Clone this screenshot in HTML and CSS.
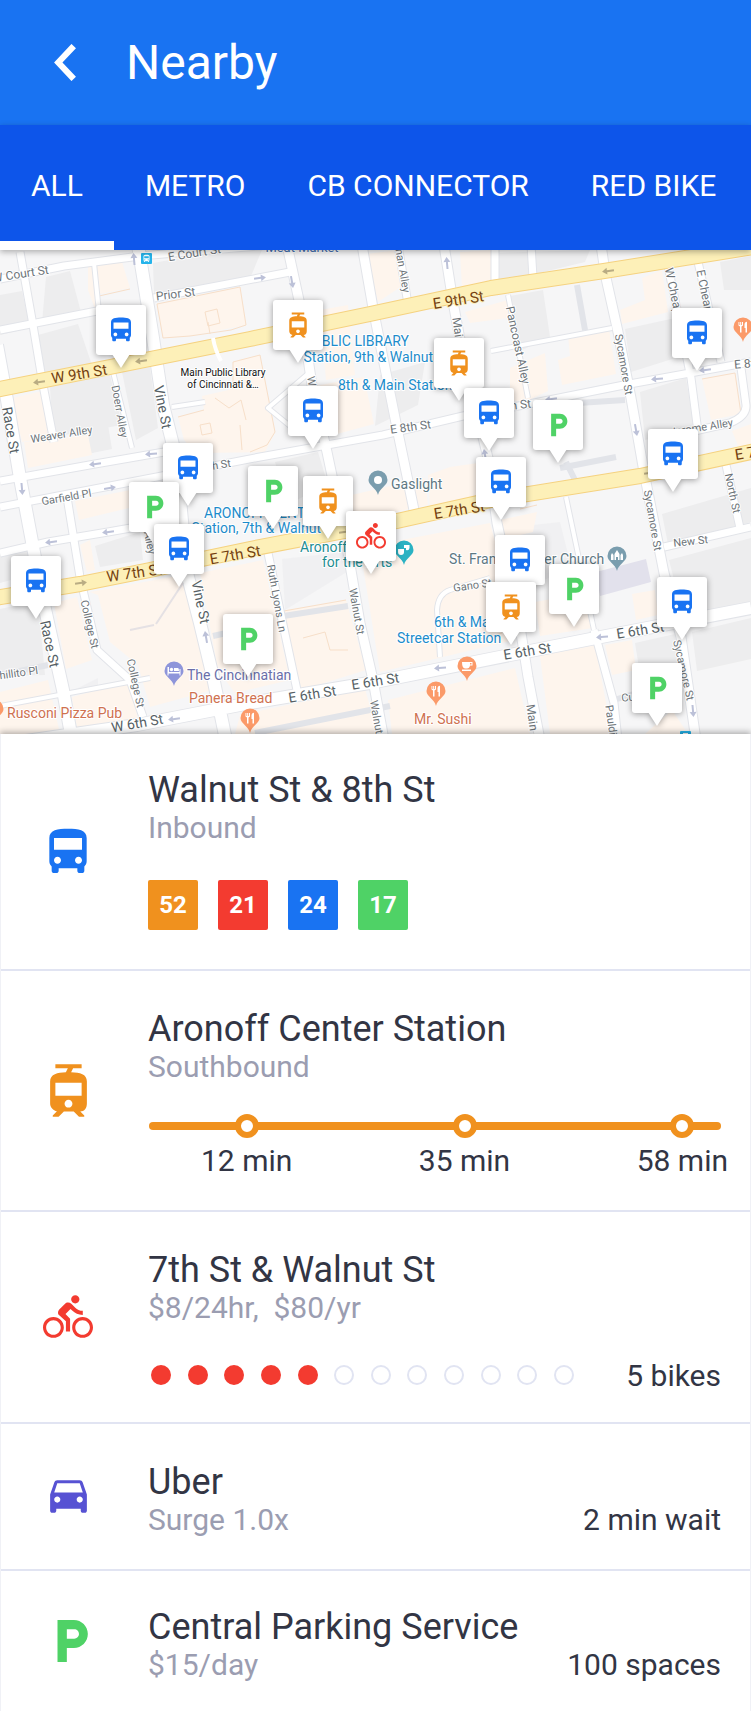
FILE: index.html
```html
<!DOCTYPE html>
<html lang="en">
<head>
<meta charset="utf-8">
<meta name="viewport" content="width=device-width, initial-scale=1">
<title>Nearby</title>
<link rel="stylesheet" href="styles.css">
</head>
<body>
<svg class="sprite" aria-hidden="true">
  <symbol id="bus" viewBox="0 0 24 24"><path d="M4 16c0 .88.39 1.67 1 2.22V20c0 .55.45 1 1 1h1c.55 0 1-.45 1-1v-1h8v1c0 .55.45 1 1 1h1c.55 0 1-.45 1-1v-1.78c.61-.55 1-1.34 1-2.22V6c0-3.5-3.58-4-8-4s-8 .5-8 4v10zm3.5 1c-.83 0-1.500-.67-1.500-1.500S6.670 14 7.500 14s1.500.67 1.500 1.500S8.330 17 7.500 17zm9 0c-.83 0-1.500-.67-1.500-1.500s.67-1.500 1.500-1.500 1.500.67 1.500 1.500-.67 1.500-1.500 1.500zm1.500-6H6V6h12v5z"/></symbol>
  <symbol id="tram" viewBox="0 0 24 24"><path d="M19 16.940V8.500c0-2.790-2.610-3.400-6.010-3.490l.76-1.510H17V2H7v1.500h4.750l-.76 1.520C7.860 5.110 5 5.730 5 8.500v8.440c0 1.450 1.190 2.660 2.590 2.970L6 21.500v.5h2.230l2-2H14l2 2h2v-.5L16.500 20h-.08c1.690 0 2.580-1.370 2.580-3.060zm-7 1.560c-.83 0-1.500-.67-1.500-1.500s.67-1.500 1.500-1.500 1.500.67 1.500 1.500-.67 1.500-1.500 1.500zm5-4.500H7V9h10v5z"/></symbol>
  <symbol id="bike" viewBox="0 0 24 24"><path d="M15.500 5.500c1.100 0 2-.9 2-2s-.9-2-2-2-2 .9-2 2 .9 2 2 2zM5 12c-2.800 0-5 2.200-5 5s2.200 5 5 5 5-2.200 5-5-2.200-5-5-5zm0 8.500c-1.900 0-3.500-1.600-3.500-3.500s1.600-3.500 3.500-3.500 3.500 1.600 3.500 3.500-1.600 3.500-3.500 3.500zm5.800-10l2.400-2.400.8.8c1.300 1.300 3 2.100 5.100 2.100V9c-1.500 0-2.700-.6-3.600-1.500l-1.900-1.900c-.5-.4-1-.6-1.600-.6s-1.100.2-1.400.6L7.800 8.400c-.4.4-.6.9-.6 1.400 0 .6.2 1.100.6 1.400L11 14v5h2v-6.200l-2.200-2.300zM19 12c-2.800 0-5 2.200-5 5s2.200 5 5 5 5-2.200 5-5-2.200-5-5-5zm0 8.500c-1.900 0-3.500-1.600-3.500-3.500s1.600-3.500 3.500-3.500 3.500 1.600 3.500 3.500-1.600 3.500-3.500 3.500z"/></symbol>
  <symbol id="car" viewBox="0 0 24 24"><path d="M18.920 6.010C18.720 5.420 18.160 5 17.500 5h-11c-.66 0-1.210.42-1.420 1.010L3 12v8c0 .55.45 1 1 1h1c.55 0 1-.45 1-1v-1h12v1c0 .55.45 1 1 1h1c.55 0 1-.45 1-1v-8l-2.080-5.990zM6.500 16c-.83 0-1.500-.67-1.500-1.500S5.670 13 6.500 13s1.500.67 1.500 1.500S7.330 16 6.500 16zm11 0c-.83 0-1.500-.67-1.500-1.500s.67-1.500 1.500-1.500 1.500.67 1.500 1.500-.67 1.500-1.500 1.500zM5 11l1.500-4.500h11L19 11H5z"/></symbol>
  <symbol id="parking" viewBox="-.5 0 24 24"><path d="M13 3H6v18h4v-6h3c3.310 0 6-2.690 6-6s-2.690-6-6-6zm.2 8H10V7h3.200c1.100 0 2 .9 2 2s-.9 2-2 2z"/></symbol>
  <symbol id="arrow" viewBox="-6 -4 12 8" overflow="visible"><path d="M-6 0L-1-3.500V-1H6V1H-1V3.500z"/></symbol>
  <symbol id="poi" viewBox="-10 -10 20 29" overflow="visible"><path d="M0-9.500a9.500 9.500 0 0 1 9.500 9.500C9.500 5.500 1.500 8 0 15C-1.500 8-9.500 5.500-9.500 0A9.500 9.500 0 0 1 0-9.500z"/></symbol>
  <symbol id="fork" viewBox="-6 -6 12 12" overflow="visible"><path d="M-4.500-5v3.500l1.500 1V5.500h1.500V-.5L0-1.500V-5h-1v3h-.8v-3h-1v3h-.8v-3zM1.500-2.500C1.500-4 2.500-5 4-5.200V5.500H2.500V1h-1z"/></symbol>
</svg>

<header class="bar">
  <button class="back" type="button" aria-label="Back">
    <svg viewBox="0 0 24 36"><path d="M20 2L5 18L20 34" /></svg>
  </button>
  <h1>Nearby</h1>
</header>

<nav class="tabs" aria-label="Services">
  <a class="tab active" href="#all" aria-current="page">ALL</a>
  <a class="tab" href="#metro">METRO</a>
  <a class="tab" href="#connector">CB CONNECTOR</a>
  <a class="tab" href="#redbike">RED BIKE</a>
</nav>

<main>
<section class="map" aria-label="Map">
<svg class="streets" viewBox="0 250 751 484">
  <rect class="land" x="0" y="250" width="751" height="484"/>
  <g class="block-grey">
    <path d="M0 295L22 291L30 328L0 335zM46 277L70 271L82 316L42 323zM38 335L78 324L92 365L45 375zM50 387L110 375L122 425L53 437zM122 372L150 367L158 428L136 440zM92 429L108 425L112 449L92 453z"/>
    <path d="M153 263L225 250L262 250L248 283L154 294zM0 555L40 548L36 573L0 583zM0 609L38 601L45 675L0 676zM80 433L97 430L107 446L90 454zM95 546L140 532L143 560L100 567z"/>
    <path d="M380 375L425 362L418 405L375 426zM275 462L318 452L328 485L286 505zM510 296L543 290L550 337L522 350zM640 392L686 378L694 428L645 440zM625 329L675 318L685 355L631 372z"/>
    <path d="M495 253L590 250L585 262L497 283zM662 514L751 488L751 522L668 544zM669 560L751 538L751 605L683 615zM635 643L675 634L680 668L640 674zM692 632L751 618L751 659L697 671zM720 262L751 256L751 290L724 290z"/>
    <path d="M282 559L345 552L350 570L285 610zM305 638L318 635L324 660L303 660zM505 528L560 522L572 570L510 592zM70 692L98 678L98 686L72 694zM225 580L245 575L252 600L228 602zM148 643L175 640L175 648L150 650z" opacity=".6"/>
  </g>
  <g class="block-beige">
    <path d="M88 267L122 262L130 288L95 295L97 314L88 290zM157 304L240 287L246 325L190 336L163 338zM178 417L204 410L202 396L233 389L233 362L260 355L275 432L265 452L195 453L184 440zM12 398L42 391L48 438L22 442zM24 442L88 435L92 455L28 468z"/>
    <path d="M366 254L398 250L405 284L378 302zM460 252L492 250L494 281L462 289zM465 312L508 300L508 318L470 323zM320 385L364 377L374 424L326 437zM320 310L348 305L355 375L326 380zM568 335L609 329L616 374L562 385L558 360L570 356z"/>
    <path d="M642 278L662 270L668 312L622 324L620 310L645 300zM702 379L735 373L741 414L711 420zM510 368L545 353L548 391L525 402L510 400zM732 431L751 424L751 450L740 450zM75 501L130 490L133 507L79 520zM80 545L90 540L95 570L87 572zM450 467L485 462L490 495L430 510L428 475z"/>
    <path d="M90 592L187 574L203 642L212 690L150 707L138 665L110 642L98 595zM200 573L263 560L290 680L235 693L218 670zM278 612L346 600L366 670L302 690L283 640zM360 548L490 523L500 560L510 641L380 672zM54 603L77 597L92 660L66 669zM72 697L130 681L138 720L78 734z"/>
    <path d="M240 715L365 689L378 734L235 734zM388 700L515 668L530 734L392 734zM540 656L595 645L612 734L550 734zM605 645L632 640L636 670L612 675zM0 692L48 680L60 734L0 734zM500 540L533 532L537 512L500 520zM535 602L590 592L593 628L540 636zM632 594L655 590L658 615L636 620zM645 734L672 710L688 734zM330 500L425 478L428 505L355 520z"/>
  </g>
  <g class="outline">
    <path d="M157 304L240 287L246 325L231 330L190 336L163 338zM178 417L204 410M233 389L233 362L260 355L275 432L267 445L250 452M200 425l10-2 2 10-10 2zM205 312l12-3 3 14-12 3zM240 425L242 450M99 296L130 289M568 335L609 329M210 334l-2-12M215 398l14 10 12-8 5 20"/>
    <path d="M278 612L346 600M303 638L325 632L330 650L348 650M520 509L537 505M476 640L502 633M546 653L600 643M702 379L735 373L741 414"/>
  </g>
  <path class="church" d="M596 572L646 559L651 582L600 596z"/>

  <g class="road-edge">
    <path class="w7" d="M0 279L64 266L140 256L270 245M0 330L97 311M154 298L290 272M0 507L110 486L260 457L383 435L463 416L524 405L624 385L751 362M0 481L95 464L170 451M0 553L48 542L108 532L165 522"/>
    <path class="w12" d="M-30 749L137 725L250 703L375 682L510 655L601 637L751 608M-3 345L7 400L20 478L43 600L63 690L72 740M138 245L153 338L163 405L173 445L180 500L187 573L200 623L213 677L226 740"/>
    <path class="w9" d="M287 245L300 305L313 392L327 452L347 547L360 623L373 680L384 740M362 245L373 308L383 358L397 428L414 510M444 245L453 302L462 350L488 458L497 523L521 633L528 677L540 740M601 245L606 278L618 332L631 398L644 472L664 573L681 637L696 740"/>
    <path class="w7" d="M20 252L33 325L43 385L54 442M67 497L80 577L97 650L130 680L143 717M268 553L282 620L297 690M668 266L691 378L698 432M698 262L721 362M741 368L746 405Q747 416 730 423L690 432M664 547L751 527M726 465L740 528M398 245L408 304M495 245L495 285M531 245L533 277M594 630L614 703L618 740"/>
    <path class="w4" d="M113 372L132 448M94 263L99 312M508 295L528 398M566 497L594 630M577 285L585 330M491 351L612 328M578 403L625 400M440 657L437 610Q438 594 450 590L490 578M0 675L48 665M0 706L150 678M213 636L240 630M277 617L348 606M310 372L268 408L290 426M172 407L205 402M614 700L640 692M560 468L616 457M566 462L575 480M255 733L390 706"/>
  </g>
  <g class="road">
    <path class="w7" d="M0 279L64 266L140 256L270 245M0 330L97 311M154 298L290 272M0 507L110 486L260 457L383 435L463 416L524 405L624 385L751 362M0 481L95 464L170 451M0 553L48 542L108 532L165 522"/>
    <path class="w12" d="M-30 749L137 725L250 703L375 682L510 655L601 637L751 608M-3 345L7 400L20 478L43 600L63 690L72 740M138 245L153 338L163 405L173 445L180 500L187 573L200 623L213 677L226 740"/>
    <path class="w9" d="M287 245L300 305L313 392L327 452L347 547L360 623L373 680L384 740M362 245L373 308L383 358L397 428L414 510M444 245L453 302L462 350L488 458L497 523L521 633L528 677L540 740M601 245L606 278L618 332L631 398L644 472L664 573L681 637L696 740"/>
    <path class="w7" d="M20 252L33 325L43 385L54 442M67 497L80 577L97 650L130 680L143 717M268 553L282 620L297 690M668 266L691 378L698 432M698 262L721 362M741 368L746 405Q747 416 730 423L690 432M664 547L751 527M726 465L740 528M398 245L408 304M495 245L495 285M531 245L533 277M594 630L614 703L618 740"/>
    <path class="w4" d="M113 372L132 448M94 263L99 312M508 295L528 398M566 497L594 630M491 351L612 328M440 657L437 610Q438 594 450 590L490 578M0 706L150 678M310 372L268 408L290 426M172 407L205 402"/>
  </g>
  <path class="ramp" d="M183 583L156 624M130 630L154 625"/>
  <g class="avenue-edge"><path d="M-5 390L120 365L250 339L370 314L491 288L604 271L760 246M-5 598L80 584L145 571L250 549L397 521L491 500L640 476L760 450"/></g>
  <g class="avenue"><path d="M-5 390L120 365L250 339L370 314L491 288L604 271L760 246M-5 598L80 584L145 571L250 549L397 521L491 500L640 476L760 450"/></g>
  <path class="road link" d="M213 338Q215 350 221 361"/>

  <g class="oneway">
    <use href="#arrow" x="-6" y="-4" width="12" height="8" transform="translate(134 259) rotate(85)"/>
    <use href="#arrow" x="-6" y="-4" width="12" height="8" transform="translate(95 464) rotate(-8)"/>
    <use href="#arrow" x="-6" y="-4" width="12" height="8" transform="translate(151 454) rotate(-5)"/>
    <use href="#arrow" x="-6" y="-4" width="12" height="8" transform="translate(110 488) rotate(170)"/>
    <use href="#arrow" x="-6" y="-4" width="12" height="8" transform="translate(22 489) rotate(-95)"/>
    <use href="#arrow" x="-6" y="-4" width="12" height="8" transform="translate(51 542) rotate(-8)"/>
    <use href="#arrow" x="-6" y="-4" width="12" height="8" transform="translate(108 532) rotate(-8)"/>
    <use href="#arrow" x="-6" y="-4" width="12" height="8" transform="translate(206 637) rotate(80)"/>
    <use href="#arrow" x="-6" y="-4" width="12" height="8" transform="translate(174 719) rotate(-8)"/>
    <use href="#arrow" x="-6" y="-4" width="12" height="8" transform="translate(260 278) rotate(172)"/>
    <use href="#arrow" x="-6" y="-4" width="12" height="8" transform="translate(292 282) rotate(-100)"/>
    <use href="#arrow" x="-6" y="-4" width="12" height="8" transform="translate(447 263) rotate(85)"/>
    <use href="#arrow" x="-6" y="-4" width="12" height="8" transform="translate(485 455) rotate(80)"/>
    <use href="#arrow" x="-6" y="-4" width="12" height="8" transform="translate(551 399) rotate(-8)"/>
    <use href="#arrow" x="-6" y="-4" width="12" height="8" transform="translate(657 379) rotate(-5)"/>
    <use href="#arrow" x="-6" y="-4" width="12" height="8" transform="translate(705 370) rotate(-8)"/>
    <use href="#arrow" x="-6" y="-4" width="12" height="8" transform="translate(636 430) rotate(-100)"/>
    <use href="#arrow" x="-6" y="-4" width="12" height="8" transform="translate(440 668) rotate(-4)"/>
    <use href="#arrow" x="-6" y="-4" width="12" height="8" transform="translate(602 637) rotate(-4)"/>
    <use href="#arrow" x="-6" y="-4" width="12" height="8" transform="translate(693 711) rotate(-95)"/>
  </g>
  <g class="oneway gold">
    <use href="#arrow" x="-6" y="-4" width="12" height="8" transform="translate(141 361) rotate(-8)"/>
    <use href="#arrow" x="-6" y="-4" width="12" height="8" transform="translate(39 382) rotate(-8)"/>
    <use href="#arrow" x="-6" y="-4" width="12" height="8" transform="translate(608 271) rotate(-8)"/>
    <use href="#arrow" x="-6" y="-4" width="12" height="8" transform="translate(81 583) rotate(172)"/>
    <use href="#arrow" x="-6" y="-4" width="12" height="8" transform="translate(345 532) rotate(172)"/>
    <use href="#arrow" x="-6" y="-4" width="12" height="8" transform="translate(650 473) rotate(172)"/>
  </g>

  <g class="avenue-name">
    <text transform="translate(80 379) rotate(-9)">W 9th St</text>
    <text transform="translate(459 305) rotate(-9)">E 9th St</text>
    <text transform="translate(135 578) rotate(-8)">W 7th St</text>
    <text transform="translate(236 560) rotate(-10)">E 7th St</text>
    <text transform="translate(460 515) rotate(-9)">E 7th St</text>
    <text transform="translate(761 456) rotate(-9)">E 7th St</text>
  </g>
  <g class="street-name large">
    <text transform="translate(138 728) rotate(-10)">W 6th St</text>
    <text transform="translate(313 699) rotate(-9)">E 6th St</text>
    <text transform="translate(376 686) rotate(-9)">E 6th St</text>
    <text transform="translate(528 656) rotate(-9)">E 6th St</text>
    <text transform="translate(641 635) rotate(-9)">E 6th St</text>
    <text transform="translate(6 431) rotate(80)">Race St</text>
    <text transform="translate(45 645) rotate(78)">Race St</text>
    <text transform="translate(158 408) rotate(79)">Vine St</text>
    <text transform="translate(196 603) rotate(78)">Vine St</text>
  </g>
  <g class="street-name medium">
    <text transform="translate(21 278) rotate(-9)">W Court St</text>
    <text transform="translate(195 257) rotate(-9)">E Court St</text>
    <text transform="translate(176 298) rotate(-7)">Prior St</text>
    <text transform="translate(514 346) rotate(78)">Pancoast Alley</text>
    <text transform="translate(455 338) rotate(82)">Main St</text>
    <text transform="translate(529 725) rotate(82)">Main St</text>
    <text transform="translate(411 431) rotate(-8)">E 8th St</text>
    <text transform="translate(511 410) rotate(-7)">E 8th St</text>
    <text transform="translate(755 367) rotate(-5)">E 8th St</text>
    <text transform="translate(672 303) rotate(78)">W Cheapside</text>
    <text transform="translate(703 303) rotate(78)">E Cheapside</text>
  </g>
  <g class="street-name">
    <text transform="translate(62 438) rotate(-9)">Weaver Alley</text>
    <text transform="translate(116 412) rotate(80)">Doerr Alley</text>
    <text transform="translate(67 501) rotate(-10)">Garfield Pl</text>
    <text transform="translate(211 470) rotate(-9)">W 8th St</text>
    <text transform="translate(143 529) rotate(78)">Doerr Alley</text>
    <text transform="translate(86 625) rotate(77)">College St</text>
    <text transform="translate(132 684) rotate(78)">College St</text>
    <text transform="translate(16 677) rotate(-8)">Shillito Pl</text>
    <text transform="translate(311 400) rotate(80)">Walnut St</text>
    <text transform="translate(353 612) rotate(80)">Walnut St</text>
    <text transform="translate(374 724) rotate(80)">Walnut St</text>
    <text transform="translate(273 599) rotate(80)">Ruth Lyons Ln</text>
    <text transform="translate(397 259) rotate(80)">Bowman Alley</text>
    <text transform="translate(620 365) rotate(80)">Sycamore St</text>
    <text transform="translate(649 521) rotate(80)">Sycamore St</text>
    <text transform="translate(680 671) rotate(77)">Sycamore St</text>
    <text transform="translate(702 431) rotate(-9)">Jerome Alley</text>
    <text transform="translate(729 494) rotate(78)">North St</text>
    <text transform="translate(691 545) rotate(-6)">New St</text>
    <text transform="translate(473 589) rotate(-8)">Gano St</text>
    <text transform="translate(647 699) rotate(-6)">Custom Al</text>
    <text transform="translate(609 733) rotate(82)">Paulding St</text>
  </g>

  <g class="poi-name">
    <g class="station">
      <text x="302" y="252" text-anchor="middle" class="market">Meat Market</text>
      <text x="409" y="346" text-anchor="end">PUBLIC LIBRARY</text>
      <text x="433" y="362" text-anchor="end">Station, 9th &amp; Walnut</text>
      <text x="338" y="390">8th &amp; Main Station</text>
      <text x="204" y="518">ARONOFF CENTER</text>
      <text x="321" y="533" text-anchor="end">Station, 7th &amp; Walnut</text>
      <text x="434" y="627">6th &amp; Main</text>
      <text x="397" y="643">Streetcar Station</text>
    </g>
    <g class="theatre"><text x="300" y="552">Aronoff Center</text><text x="322" y="567">for the Arts</text></g>
    <g class="place"><text x="391" y="489">Gaslight</text><text x="449" y="564">St. Francis Xavier Church</text></g>
    <g class="hotel"><text x="187" y="680">The Cincinnatian</text></g>
    <g class="food"><text x="189" y="703">Panera Bread</text><text x="7" y="718">Rusconi Pizza Pub</text><text x="414" y="724">Mr. Sushi</text></g>
    <g class="library"><text x="223" y="376">Main Public Library</text><text x="223" y="388">of Cincinnati &amp;…</text></g>
  </g>

  <g class="stop-blue">
    <rect x="141" y="253" width="11" height="11" rx="1"/><use href="#bus" x="142" y="254" width="9" height="9"/>
    <rect x="680" y="731" width="11" height="11" rx="1"/><rect class="inner" x="683" y="733" width="5" height="3"/>
  </g>
  <g class="poi-food">
    <g transform="translate(743 327)"><use href="#poi" x="-10" y="-10" width="20" height="29"/><use class="glyph" href="#fork" x="-6" y="-6" width="12" height="12"/></g>
    <g transform="translate(250 718)"><use href="#poi" x="-10" y="-10" width="20" height="29"/><use class="glyph" href="#fork" x="-6" y="-6" width="12" height="12"/></g>
    <g transform="translate(436 691)"><use href="#poi" x="-10" y="-10" width="20" height="29"/><use class="glyph" href="#fork" x="-6" y="-6" width="12" height="12"/></g>
    <g transform="translate(-6 709)"><use href="#poi" x="-10" y="-10" width="20" height="29"/></g>
    <g transform="translate(467 666)"><use href="#poi" x="-10" y="-10" width="20" height="29"/><path class="glyph" d="M-5-4H5.500V-.5H3Q2.500 2.500 0 2.500H-2Q-5 2-5-4zM3-3V-1.500H4.500V-3zM-5 3.500H4V5H-5z"/></g>
  </g>
  <g class="poi-place">
    <g transform="translate(378 480)"><use href="#poi" x="-10" y="-10" width="20" height="29"/><circle class="glyph" r="4"/></g>
    <g transform="translate(617 556)"><use href="#poi" x="-10" y="-10" width="20" height="29"/><path class="glyph" d="M-6 4V-1L-5-3L-3.500-1V4zM-2.500 4V-2L0-6L2.500-2V4H1V1H-1V4zM3.500 4V-1L5-3L6-1V4z"/></g>
  </g>
  <g class="poi-theatre" transform="translate(404 550)"><use href="#poi" x="-10" y="-10" width="20" height="29"/><path class="glyph" d="M-6-1L0-1V2Q0 5-3 5T-6 2zM0-5L5.500-5V-2Q5 1 2 0V-2H0z"/></g>
  <g class="poi-hotel" transform="translate(174 671)"><use href="#poi" x="-10" y="-10" width="20" height="29"/><path class="glyph" d="M-6.500-4H-5V1H5.500V-2H6.500V4.500H5.500V2.500H-5.500V4.500H-6.500zM0-3H4Q5-3 5 0H0z"/><circle class="glyph" cx="-2.500" cy="-1.500" r="1.700"/></g>
</svg>

<button type="button" class="pin bus" aria-label="Bus" style="--x:121;--y:55"><svg><use href="#bus"/></svg></button>
<button type="button" class="pin tram" aria-label="Streetcar" style="--x:298;--y:50"><svg><use href="#tram"/></svg></button>
<button type="button" class="pin bus" aria-label="Bus" style="--x:313;--y:136"><svg><use href="#bus"/></svg></button>
<button type="button" class="pin tram" aria-label="Streetcar" style="--x:459;--y:88"><svg><use href="#tram"/></svg></button>
<button type="button" class="pin bus" aria-label="Bus" style="--x:489;--y:138"><svg><use href="#bus"/></svg></button>
<button type="button" class="pin bus" aria-label="Bus" style="--x:501;--y:207"><svg><use href="#bus"/></svg></button>
<button type="button" class="pin parking" aria-label="Parking" style="--x:558;--y:150"><svg><use href="#parking"/></svg></button>
<button type="button" class="pin bus" aria-label="Bus" style="--x:697;--y:58"><svg><use href="#bus"/></svg></button>
<button type="button" class="pin bus" aria-label="Bus" style="--x:673;--y:179"><svg><use href="#bus"/></svg></button>
<button type="button" class="pin bus" aria-label="Bus" style="--x:188;--y:193"><svg><use href="#bus"/></svg></button>
<button type="button" class="pin parking" aria-label="Parking" style="--x:154;--y:232"><svg><use href="#parking"/></svg></button>
<button type="button" class="pin parking" aria-label="Parking" style="--x:273;--y:216"><svg><use href="#parking"/></svg></button>
<button type="button" class="pin tram" aria-label="Streetcar" style="--x:328;--y:226"><svg><use href="#tram"/></svg></button>
<button type="button" class="pin bus" aria-label="Bus" style="--x:179;--y:274"><svg><use href="#bus"/></svg></button>
<button type="button" class="pin bus" aria-label="Bus" style="--x:36;--y:306"><svg><use href="#bus"/></svg></button>
<button type="button" class="pin parking" aria-label="Parking" style="--x:248;--y:364"><svg><use href="#parking"/></svg></button>
<button type="button" class="pin bike" aria-label="Bike share" style="--x:371;--y:261"><svg><use href="#bike"/></svg></button>
<button type="button" class="pin bus" aria-label="Bus" style="--x:520;--y:285"><svg><use href="#bus"/></svg></button>
<button type="button" class="pin parking" aria-label="Parking" style="--x:574;--y:314"><svg><use href="#parking"/></svg></button>
<button type="button" class="pin tram" aria-label="Streetcar" style="--x:511;--y:332"><svg><use href="#tram"/></svg></button>
<button type="button" class="pin bus" aria-label="Bus" style="--x:682;--y:327"><svg><use href="#bus"/></svg></button>
<button type="button" class="pin parking" aria-label="Parking" style="--x:657;--y:413"><svg><use href="#parking"/></svg></button>
</section>

<ul class="list">
  <li class="row first">
    <svg class="icon bus"><use href="#bus"/></svg>
    <div class="body">
      <h2>Walnut St &amp; 8th St</h2>
      <p class="sub">Inbound</p>
      <ul class="routes">
        <li class="route orange">52</li>
        <li class="route red">21</li>
        <li class="route blue">24</li>
        <li class="route green">17</li>
      </ul>
    </div>
  </li>
  <li class="row second">
    <svg class="icon tram"><use href="#tram"/></svg>
    <div class="body">
      <h2>Aronoff Center Station</h2>
      <p class="sub">Southbound</p>
      <ol class="timeline">
        <li>12 min</li>
        <li>35 min</li>
        <li>58 min</li>
      </ol>
    </div>
  </li>
  <li class="row third">
    <svg class="icon bike"><use href="#bike"/></svg>
    <div class="body">
      <h2>7th St &amp; Walnut St</h2>
      <p class="sub">$8/24hr,&nbsp; $80/yr</p>
      <div class="bikes">
        <div class="dots" role="img" aria-label="5 of 12 docks have bikes">
          <i class="dot full"></i><i class="dot full"></i><i class="dot full"></i><i class="dot full"></i><i class="dot full"></i><i class="dot"></i><i class="dot"></i><i class="dot"></i><i class="dot"></i><i class="dot"></i><i class="dot"></i><i class="dot"></i>
        </div>
        <span class="value">5 bikes</span>
      </div>
    </div>
  </li>
  <li class="row fourth">
    <svg class="icon car" viewBox="0 1 24 24"><use href="#car" width="24" height="24"/></svg>
    <div class="body">
      <h2>Uber</h2>
      <div class="split"><p class="sub">Surge 1.0x</p><span class="value">2 min wait</span></div>
    </div>
  </li>
  <li class="row fifth">
    <svg class="icon parking" viewBox="1 0 24 24"><use href="#parking" x="2" width="24" height="24"/></svg>
    <div class="body">
      <h2>Central Parking Service</h2>
      <div class="split"><p class="sub">$15/day</p><span class="value">100 spaces</span></div>
    </div>
  </li>
</ul>
</main>
</body>
</html>
```
FILE: styles.css
```css
:root {
  --blue: #1973f2;
  --deep: #0d55ea;
  --orange: #f0911e;
  --red: #f33b30;
  --green: #4fd266;
  --violet: #5752d3;
  --ink: #323544;
  --muted: #9b9db1;
  --line: #e1e4f2;
}

*, *::before { box-sizing: border-box; }

body {
  margin: 0;
  background: #fff;
  color: var(--ink);
  font-family: Roboto, "Liberation Sans", sans-serif;
  font-size: 30px;
  line-height: 36px;
}

h1, h2, p, ul, ol { margin: 0; padding: 0; font-weight: 400; }
ul, ol { list-style: none; }
.sprite { display: none; }

.bus { fill: var(--blue); }
.tram { fill: var(--orange); }
.bike { fill: var(--red); }
.car { fill: var(--violet); }
.parking { fill: var(--green); }

/* Header */
.bar {
  display: flex;
  align-items: center;
  height: 125px;
  padding-left: 53px;
  gap: 48px;
  background: var(--blue);
  color: #fff;
}
.back {
  width: 25px;
  height: 38px;
  padding: 0;
  border: 0;
  background: none;
}
.back svg {
  display: block;
  width: 25px;
  height: 37px;
  fill: none;
  stroke: #fff;
  stroke-width: 6;
}
.bar h1 { font-size: 48px; line-height: 56px; }

.tabs {
  position: relative;
  z-index: 2;
  display: flex;
  height: 125px;
  background: var(--deep);
  box-shadow: 0 2px 6px rgba(0, 0, 0, .3);
}
.tab {
  display: flex;
  align-items: center;
  padding: 5px 31px 0;
  border-bottom: 9px solid transparent;
  color: #fff;
  text-decoration: none;
  white-space: nowrap;
}
.tab.active { border-bottom-color: #fff; }

/* Map */
.map {
  position: relative;
  aspect-ratio: 751 / 484;
  overflow: hidden;
}
.streets { display: block; width: 100%; height: 100%; }
.streets path { stroke-linejoin: round; }
.land { fill: #f6f6f7; }
.block-grey { fill: #ededee; }
.block-beige { fill: #fef5ed; }
.outline { fill: none; stroke: #f7dfc9; }
.church { fill: #e2e1ec; }
.road, .road-edge { fill: none; stroke: #fff; }
.road-edge { stroke: #e2e4e9; }
.road .w4 { stroke-width: 4; }
.road .w7 { stroke-width: 7; }
.road .w9 { stroke-width: 9; }
.road .w12 { stroke-width: 12; }
.road-edge .w4 { stroke-width: 6; }
.road-edge .w7 { stroke-width: 9; }
.road-edge .w9 { stroke-width: 11; }
.road-edge .w12 { stroke-width: 14; }
.road.link { stroke-width: 4; }
.ramp { fill: none; stroke: #e5e1e4; stroke-width: 2; }
.avenue, .avenue-edge { fill: none; stroke: #fdf0b8; stroke-width: 14; }
.avenue-edge { stroke: #f5d280; stroke-width: 16; }
.oneway { fill: #bcc1d8; }
.oneway.gold { fill: #b9ac83; }

.streets text { paint-order: stroke; stroke: #fff; stroke-width: 2; stroke-linejoin: round; }
.avenue-name { fill: #74400f; font-size: 15px; text-anchor: middle; }
.streets .avenue-name text { stroke: #fdf0b8; }
.street-name { fill: #6d7479; font-size: 11px; text-anchor: middle; }
.street-name.medium { font-size: 12px; }
.street-name.large { fill: #565f65; font-size: 14px; }
.poi-name { font-size: 14px; }
.station { fill: #1c8ccb; }
.market { fill: #4470b5; font-size: 13px; }
.theatre { fill: #1d8d92; }
.place { fill: #5e7883; }
.hotel { fill: #6a6ea8; }
.food { fill: #cf7150; }
.library { fill: #111; font-size: 10px; text-anchor: middle; }
.stop-blue { fill: #25b3ea; }
.stop-blue use, .stop-blue .inner, .glyph { fill: #fff; }
.poi-food { fill: #fb9a69; }
.poi-place { fill: #7a9dae; }
.poi-theatre { fill: #2bb2c3; }
.poi-hotel { fill: #8e95da; }

.pin {
  position: absolute;
  left: calc(var(--x) / 751 * 100%);
  top: calc(var(--y) / 484 * 100%);
  display: grid;
  place-items: center;
  width: 50px;
  height: 50px;
  margin-left: -25px;
  padding: 0;
  border: 0;
  border-radius: 3px;
  background: #fff;
  filter: drop-shadow(0 1px 3px rgba(0, 0, 0, .38));
}
.pin::after {
  content: "";
  position: absolute;
  top: 49px;
  left: 16px;
  border: 9px solid transparent;
  border-top: 14px solid #fff;
  border-bottom: 0;
}
.pin svg { width: 30px; height: 30px; }

/* List */
.list {
  position: relative;
  border: solid #f0f1f6;
  border-width: 0 1px;
  background: #fff;
  box-shadow: 0 -2px 6px rgba(0, 0, 0, .3);
}
.row {
  display: grid;
  grid-template-columns: 134px 1fr;
  column-gap: 13px;
  align-items: center;
  padding-right: 29px;
  border-bottom: 2px solid var(--line);
}
.body { padding: 38px 0 31px; }
.first .body { padding: 36px 0 39px; }
.third .body { padding-bottom: 28px; }
.fifth .body { padding: 36px 0 28px; }
.fifth { border: 0; }

.icon { justify-self: center; width: 56px; height: 56px; }
.icon.tram { width: 63px; height: 63px; }
.icon.bike { width: 50px; height: 50px; }
.icon.car { width: 49px; height: 49px; }

.body h2 { font-size: 36px; line-height: 40px; }
.sub { color: var(--muted); }
.split, .bikes { display: flex; justify-content: space-between; }

.routes { display: flex; gap: 20px; margin-top: 34px; }
.route {
  width: 50px;
  border-radius: 2px;
  color: #fff;
  font-size: 24px;
  font-weight: 700;
  line-height: 50px;
  text-align: center;
}
.orange { background: var(--orange); }
.red { background: var(--red); }
.blue { background: var(--blue); }
.green { background: var(--green); }

.timeline {
  position: relative;
  display: flex;
  justify-content: space-between;
  margin-top: 29px;
  padding-left: 53px;
}
.timeline::before {
  content: "";
  position: absolute;
  top: 8px;
  left: 1px;
  right: 0;
  height: 8px;
  border-radius: 4px;
  background: var(--orange);
}
.timeline li {
  position: relative;
  display: grid;
  justify-items: center;
  row-gap: 5px;
}
.timeline li:last-child { margin-right: -7px; }
.timeline li::before {
  content: "";
  width: 24px;
  height: 24px;
  border: 6px solid var(--orange);
  border-radius: 50%;
  background: #fff;
}

.bikes { margin-top: 32px; }
.dots {
  display: flex;
  flex: 0 1 426px;
  align-items: center;
  justify-content: space-between;
  padding: 0 0 3px 3px;
}
.dot {
  width: 20px;
  height: 20px;
  border: 2px solid var(--line);
  border-radius: 50%;
}
.dot.full { border-color: var(--red); background: var(--red); }
```
